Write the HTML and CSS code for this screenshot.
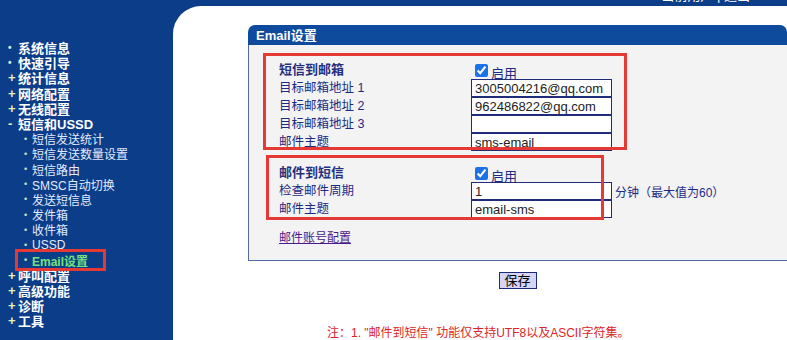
FILE: index.html
```html
<!DOCTYPE html>
<html>
<head>
<meta charset="utf-8">
<title>Email设置</title>
<link rel="stylesheet" href="styles.css">
</head>
<body>
<div class="top">
	<span class="topText">当前用户 | 退出</span>
</div>
<div class="main">
	<ul class="menu">
		<li class="leaf"><span class="item">系统信息</span></li>
		<li class="leaf"><span class="item">快速引导</span></li>
		<li class="plus"><span class="item">统计信息</span></li>
		<li class="plus"><span class="item">网络配置</span></li>
		<li class="plus"><span class="item">无线配置</span></li>
		<li class="minus"><span class="item">短信和USSD</span>
			<ul class="sub">
				<li><span class="item">短信发送统计</span></li>
				<li><span class="item">短信发送数量设置</span></li>
				<li><span class="item">短信路由</span></li>
				<li><span class="item">SMSC自动切换</span></li>
				<li><span class="item">发送短信息</span></li>
				<li><span class="item">发件箱</span></li>
				<li><span class="item">收件箱</span></li>
				<li><span class="item">USSD</span></li>
				<li class="active"><span class="item">Email设置</span></li>
			</ul>
		</li>
		<li class="plus"><span class="item">呼叫配置</span></li>
		<li class="plus"><span class="item">高级功能</span></li>
		<li class="plus"><span class="item">诊断</span></li>
		<li class="plus"><span class="item">工具</span></li>
	</ul>
	<div class="content">
		<div class="panel">
			<div class="panelHead">Email设置</div>
			<div class="panelBody">
				<div class="form">
					<div class="label strong">短信到邮箱</div>
					<div class="cell"><input type="checkbox" checked><span class="chkText">启用</span></div>
					<div class="label">目标邮箱地址 1</div>
					<div class="cell"><input class="field" type="text" value="3005004216@qq.com"></div>
					<div class="label">目标邮箱地址 2</div>
					<div class="cell"><input class="field" type="text" value="962486822@qq.com"></div>
					<div class="label">目标邮箱地址 3</div>
					<div class="cell"><input class="field" type="text" value=""></div>
					<div class="label">邮件主题</div>
					<div class="cell"><input class="field" type="text" value="sms-email"></div>
				</div>
				<div class="form second">
					<div class="label strong">邮件到短信</div>
					<div class="cell"><input type="checkbox" checked><span class="chkText">启用</span></div>
					<div class="label">检查邮件周期</div>
					<div class="cell"><input class="field" type="text" value="1"><span class="unit">分钟（最大值为60）</span></div>
					<div class="label">邮件主题</div>
					<div class="cell"><input class="field" type="text" value="email-sms"></div>
				</div>
				<a class="acct" href="#">邮件账号配置</a>
			</div>
			<div class="mark markOne"></div>
			<div class="mark markTwo"></div>
		</div>
		<div class="actions">
			<button class="save">保存</button>
		</div>
		<p class="note">注：1. "邮件到短信" 功能仅支持UTF8以及ASCII字符集。</p>
	</div>
</div>
</body>
</html>
```

FILE: styles.css
```css
* {
	padding:0;
	margin:0;
}
html, body {
	background:#0c3d89;
	height:100%;
	overflow:hidden;
}
body {
	font-family:"Liberation Sans", "Noto Sans CJK SC", sans-serif;
	font-size:12px;
}
ul {
	list-style-type:none;
}
.top {
	height:6px;
	overflow:hidden;
	text-align:right;
	padding-right:37px;
}
.topText {
	display:inline-block;
	color:white;
	font-size:13px;
	line-height:14px;
	margin-top:-11px;
	vertical-align:top;
}
.main {
	display:flex;
	height:334px;
}
.menu {
	width:173px;
	flex:none;
	padding-top:34px;
	color:white;
}
.menu .item {
	display:flex;
	align-items:center;
	height:15.2px;
	white-space:nowrap;
}
.menu > li {
	font-size:13px;
	font-weight:bold;
	padding-left:8px;
}
.menu > li > .item::before {
	width:10px;
	flex:none;
	color:#e6efb0;
	font-weight:bold;
}
.menu > li.leaf > .item::before {
	content:"•";
	color:#d6eed0;
	font-size:10px;
}
.menu > li.plus > .item::before {
	content:"+";
}
.menu > li.minus > .item::before {
	content:"-";
}
.sub {
	padding-left:14px;
}
.sub li {
	font-size:12px;
	font-weight:normal;
	color:#e4ebff;
	position:relative;
}
.sub li .item::before {
	content:"•";
	width:8px;
	flex:none;
	font-size:9px;
	color:#c9e6b8;
	padding-left:2px;
}
.sub li.active {
	color:#74e27a;
	font-weight:bold;
}
.sub li.active::after {
	content:"";
	position:absolute;
	left:-7px;
	top:-4px;
	width:85px;
	height:16px;
	border:3px solid #e53935;
}
.content {
	flex:1;
	background:white;
	border-top-left-radius:28px;
	padding:19px 0 0 75px;
}
.panel {
	position:relative;
	width:539px;
}
.panelHead {
	height:20px;
	line-height:21px;
	background:#0e4b9c;
	color:white;
	font-size:13px;
	font-weight:bold;
	padding-left:8px;
	border-radius:7px 7px 0 0;
}
.panelBody {
	background:#f3f3f3;
	border-left:1px solid #5665b2;
	border-bottom:1px solid #5665b2;
	padding:16px 0 15px 30px;
	color:#1d2b85;
}
.form {
	display:grid;
	grid-template-columns:192px 141px auto;
	grid-auto-rows:18px;
}
.form .label {
	grid-column:1;
	line-height:18px;
	font-size:12.5px;
}
.form .cell {
	grid-column:2 / 4;
	display:flex;
	align-items:center;
	white-space:nowrap;
}
.label.strong {
	font-weight:bold;
	font-size:13px;
	color:#24307e;
}
.second {
	margin-top:13px;
}
input[type=checkbox] {
	width:13px;
	height:13px;
	margin:0 3px 0 4px;
	accent-color:#1a73e8;
}
.chkText {
	font-size:13px;
	padding-top:5px;
}
.field {
	width:141px;
	height:18px;
	box-sizing:border-box;
	border:1px solid #1f2c7a;
	padding:0 3px;
	font-family:"Liberation Sans", "Noto Sans CJK SC", sans-serif;
	font-size:13px;
	color:#222;
	background:white;
	outline:none;
}
.unit {
	padding-left:3px;
	font-size:12px;
	color:#1d2b85;
}
.acct {
	display:inline-block;
	margin-top:13px;
	line-height:14px;
	color:#4b1a8a;
	font-size:12px;
}
.mark {
	position:absolute;
	border:3px solid #e53935;
	pointer-events:none;
}
.markOne {
	left:15px;
	top:28px;
	width:358px;
	height:91px;
}
.markTwo {
	left:18px;
	top:130px;
	width:332px;
	height:59px;
}
.actions {
	width:539px;
	text-align:center;
	margin-top:11px;
}
.save {
	width:38px;
	height:17px;
	background:#d4d5f7;
	border:1px solid #1b2a7a;
	font-family:"Liberation Sans", "Noto Sans CJK SC", sans-serif;
	font-size:13px;
	line-height:14px;
	color:black;
}
.note {
	margin:37px 0 0 79px;
	color:#e02424;
	font-size:12px;
	line-height:14px;
}
```
